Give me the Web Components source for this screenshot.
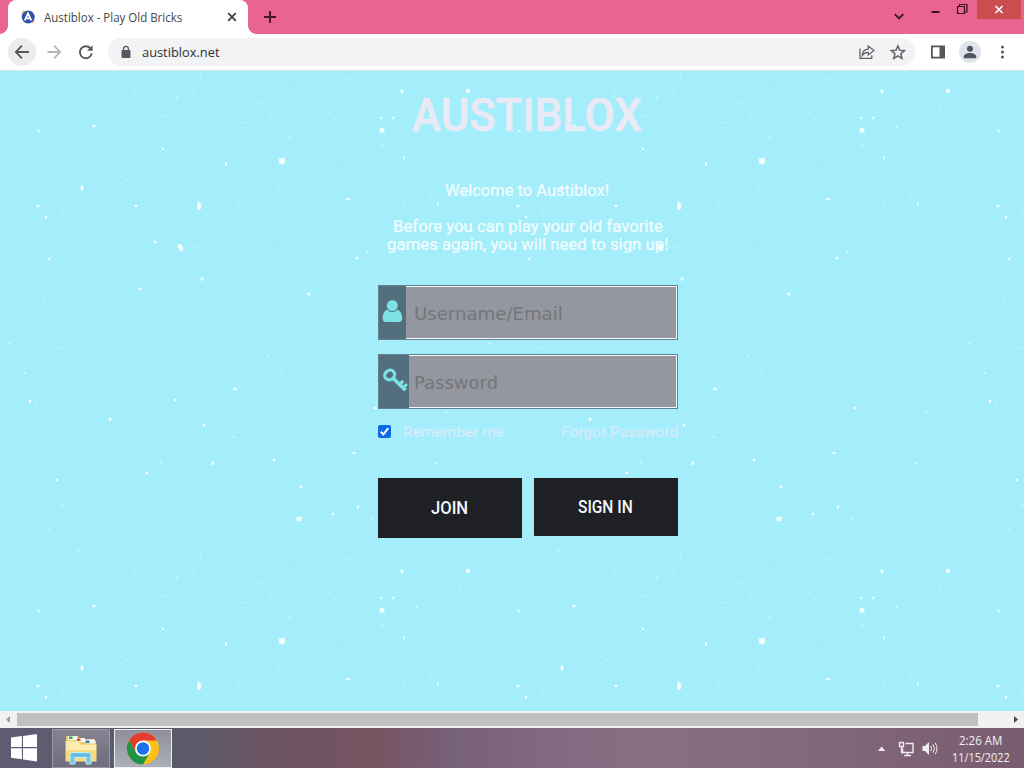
<!DOCTYPE html>
<html lang="en">
<head>
<meta charset="utf-8">
<title>Austiblox - Play Old Bricks</title>
<style>
    html, body{
        margin:0;
        height:100%;
        overflow:hidden;
    }
</style>
</head>
<body>
<desktop-screen></desktop-screen>

<script>
(function () {
    "use strict";

    function define(name, html, setup) {
        var tmpl = document.createElement("template");
        tmpl.innerHTML = html;

        customElements.define(name, class extends HTMLElement {
            constructor() {
                super();
                this.attachShadow({ mode: "open" });
                this.shadowRoot.appendChild(tmpl.content.cloneNode(true));
            }

            connectedCallback() {
                if (setup) {
                    setup(this, this.shadowRoot);
                }
            }
        });
    }

    // text condensed or stretched to the width given in the "width" attribute
    define("fit-text", `
        <style>
            :host{
                display:inline-block;
                white-space:nowrap;
                flex:none;
            }
            span{
                display:inline-block;
                transform-origin:0 50%;
            }
        </style>
        <span><slot></slot></span>
    `, function (host, root) {
        var span = root.querySelector("span");
        var width = Number(host.getAttribute("width"));
        host.style.width = width + "px";
        span.style.transform = "scaleX(" + width / span.offsetWidth + ")";
    });

    define("tab-strip", `
        <style>
            :host{
                display:flex;
                height:34px;
                background:#e96491;
                font:12px "Open Sans", sans-serif;
                color:#45474a;
            }
            .tab{
                position:relative;
                box-sizing:border-box;
                width:240px;
                margin-left:8px;
                padding:0 10px 0 13px;
                display:flex;
                align-items:center;
                background:#fff;
                border-radius:8px 8px 0 0;
            }
            .tab::before, .tab::after{
                content:"";
                position:absolute;
                bottom:0;
                width:8px;
                height:8px;
            }
            .tab::before{
                left:-8px;
                background:radial-gradient(circle at 0 0, transparent 7.5px, #fff 8px);
            }
            .tab::after{
                right:-8px;
                background:radial-gradient(circle at 100% 0, transparent 7.5px, #fff 8px);
            }
            .fav{
                margin-right:9px;
            }
            .x{
                margin-left:auto;
            }
            .plus{
                margin:10px 0 0 15px;
            }
            .down{
                margin:12px 25px 0 auto;
            }
            .win{
                display:flex;
                height:19px;
            }
        </style>
        <div class="tab">
            <svg class="fav" width="14" height="14" viewBox="0 0 14 14">
                <circle cx="7.2" cy="7" r="6.5" fill="#2b55a8"/>
                <path d="M1 3.5 3.5 1" stroke="#e0a04a" stroke-width="1.6"/>
                <path d="M10.5 12.5 13 10.5" stroke="#d05a55" stroke-width="1.6"/>
                <path d="M3.8 10.3 7 3.4l3.2 6.9M5 8.3h4" fill="none" stroke="#fff" stroke-width="1.8"/>
            </svg>
            <fit-text width="138">Austiblox - Play Old Bricks</fit-text>
            <svg class="x" width="12" height="12"><path d="m2.2 2.2 7.6 7.6m0-7.6-7.6 7.6" stroke="#3c4043" stroke-width="1.7"/></svg>
        </div>
        <svg class="plus" width="14" height="14"><path d="M7 1v12M1 7h12" stroke="#431727" stroke-width="1.9"/></svg>
        <svg class="down" width="12" height="9"><path d="m1.7 2.200 4.300 4.300 4.300-4.300" fill="none" stroke="#431727" stroke-width="1.9"/></svg>
        <div class="win">
            <svg width="47" height="19" fill="none" stroke="#35121f">
                <path d="M1.500 12h8" stroke-width="2"/>
                <path d="M27.500 6.500h7v7h-7zM29.500 6V4.500h7.500v7.500h-2" stroke-width="1.200"/>
            </svg>
            <svg width="44" height="19" style="margin-right:3px">
                <path d="M0 0h44v19H0z" fill="#cb4d50"/>
                <path d="m18.5 6 7 7m0-7-7 7" stroke="#fff" stroke-width="1.7"/>
            </svg>
        </div>
    `);

    define("address-bar", `
        <style>
            :host{
                display:flex;
                align-items:center;
                box-sizing:border-box;
                height:37px;
                padding:0 8px;
                background:#fff;
                border-bottom:1px solid #d5e5e7;
                font:13px "Open Sans", sans-serif;
                color:#2e3134;
            }
            svg{
                display:block;
                flex:none;
            }
            .box{
                box-sizing:border-box;
                display:flex;
                align-items:center;
                width:807px;
                height:28px;
                margin:0 15px 0 12px;
                padding:0 7px 0 12px;
                border-radius:14px;
                background:#f1f3f4;
            }
            .box fit-text{
                margin:0 auto 0 10px;
            }
        </style>
        <svg width="88" height="28" fill="none" stroke="#55585c" stroke-width="1.8">
            <circle cx="14" cy="14" r="14" fill="#ececed" stroke="none"/>
            <path d="M21 14H8M14 7.6 7.800 14l6.200 6.400"/>
            <path d="M39.500 14h13M46 7.600l6.200 6.400-6.200 6.400" stroke="#b4b6b8"/>
            <path d="M82.500 10.400a6 6 0 1 0 1.300 4.900"/>
            <path d="M84.600 7.200v5.600H79z" fill="#55585c" stroke="none"/>
        </svg>
        <div class="box">
            <svg width="12" height="14">
                <rect x="1.500" y="5" width="9" height="8" rx="1" fill="#55585c"/>
                <path d="M3.600 6V3.700a2.400 2.400 0 0 1 4.800 0V6" fill="none" stroke="#55585c" stroke-width="1.300"/>
            </svg>
            <fit-text width="78">austiblox.net</fit-text>
            <svg width="50" height="18" fill="none" stroke="#606368" stroke-width="1.300">
                <path d="M2 5.500v9.800h11.800v-3"/>
                <path d="M4.300 12.300c.3-3.900 2.300-5.900 6-6.100V3l5.600 4.500-5.600 4.500V9.300c-2.700 0-4.500.8-6 3z"/>
                <path d="m39.900 2.800 1.900 4.400 4.700.4-3.600 3.100 1.100 4.600-4.100-2.500-4.100 2.500 1.100-4.600-3.600-3.100 4.700-.4z" stroke-width="1.500"/>
            </svg>
        </div>
        <svg width="78" height="24" fill="#55585c">
            <path d="M1 5.500h14v13H1zm1.800 1.800v9.400h6.700V7.300z" fill-rule="evenodd"/>
            <circle cx="40" cy="12" r="11" fill="#dfe4ea"/>
            <circle cx="40" cy="8.700" r="3" fill="#4d5563"/>
            <path d="M33.800 18.200v-1.600c0-2.200 3.400-3.500 6.200-3.500s6.200 1.300 6.200 3.500v1.600z" fill="#4d5563"/>
            <circle cx="72.500" cy="7" r="1.500"/><circle cx="72.500" cy="12" r="1.500"/><circle cx="72.500" cy="17" r="1.500"/>
        </svg>
    `);

    // x, y, rx, ry of each snow fleck on the 480px tile
    var FLECKS = [
        [94,55,2,1.4],[39,60,2,1.2],[177,27,1.3,1.3],[282,90,3.8,3.8],[226,93,1.2,2.6],[163,78,1.3,1.6],
        [82,117,1.9,3.2],[38,135,2,1.4],[136,135,2,1.5],[46,146,1.4,1.4],[199,135,2.4,5],[155,171,2,1.6],
        [202,208,2,2],[140,218,2,1.4],[309,223,2.1,2.1],[49,188,1.4,1.4],[348,128,2.7,1.3],[341,134,1,1],
        [357,187,2.3,1.8],[367,181,1.2,1.2],[235,318,2.4,1.8],[126,83,1,1],[5,83,.9,.9],
        [290,67,1.2,1.2],[271,44,1,1],[258,32,1,1],[30,330,1.6,2],[36,335,1,1],[175,329,1.7,1.7],
        [110,348,2,2],[204,354,1.6,1.4],[207,344,.8,.8],[234,366,1.3,1.3],[218,371,.9,.9],[274,389,1.6,1.6],
        [354,382,2.2,1.6],[161,391,1.1,1.1],[213,392,1.8,2.3],[147,402,1.8,1.4],[57,409,1.5,2],[62,435,1.2,1.2],
        [49,458,1,1],[78,479,1.3,1.1],[262,414,1,1],[301,416,1.5,2],[299,448,3.2,2.9],[333,443,1.6,1.6],
        [333,447,1,.8],[358,436,1.5,2.4],[372,448,1,1],[402,20,1.8,2.3],[468,20,2.6,2.6],[382,59,3,3],
        [381,47,1.5,1.5],[393,47,1.2,1.8],[417,56,1.3,1.3],[382,75,1.2,1.2],[370,83,1,1],[404,87,1.2,1.8],
        [406,81,1,.8],[405,135,1.3,1],[438,133,1.2,1.8],[346,82,1,1],[166,17,.8,.8],[34,13,.8,1],
        [76,193,.9,.9],[85,211,1.2,.9],[115,126,.8,.8],[66,133,1,.7],[210,89,1.2,.8],[127,109,1,.8],
        [206,136,1,.8],[239,135,1,1],[278,135,.9,.9],[298,209,1,1],[311,211,.9,.7],[239,235,1,.9],
        [102,252,1.2,.8],[202,260,1,1],[9,272,1.2,1],[49,278,.9,.9],[61,277,1,1.3],[258,275,1,1],
        [268,285,1.1,1],[25,302,1.2,1.2],[187,292,.7,1.6],[295,292,1,.8],[315,293,1,1],[375,337,2.6,1.4],
        [446,341,1.3,1],[362,220,1,1],[141,237,1,1],[94,305,1.3,1.2],[436,392,2,1],[449,124,.8,.8],
        [429,45,1,.8],[460,36,1,.8],[261,-1,1.6,1],[335,48,1,.8],[313,148,.8,.8],[13,380,1,1],[160,397,.9,.9]
    ];

    define("snow-sky", `
        <style>
            :host{
                position:relative;
                display:block;
                overflow:hidden;
                background:#a3eefa;
            }
            svg{
                position:absolute;
                inset:0;
                width:100%;
                height:100%;
            }
            .over{
                position:relative;
            }
        </style>
        <svg>
            <defs>
                <pattern id="tile" width="480" height="480" patternUnits="userSpaceOnUse">
                    <g id="flecks" fill="#f6ffff"></g>
                    <ellipse cx="180.500" cy="176.500" rx="2.200" ry="4" fill="#f6ffff" transform="rotate(-25 180.500 176.500)"/>
                    <path d="M201 1v8M134 18v9M194 17v9M278 113v9M62 137v9M302 172v7M43 226v8M282 298v8M160 45h8M77 44h6M228 49h8M240 52h8M188 176h16M284 220h11M166 48h6M320 15h6M345 7h8M338 71h7M181 107h5M430 118v12" stroke="#b5f3fc" fill="none"/>
                    <path d="M26 95l3 3M292 12h3M162 31h2M338 91l3 4M275 171h3M234 172v2M238 270v2M318 91l3 1" stroke="#9ae5f2" fill="none"/>
                </pattern>
            </defs>
            <rect width="100%" height="100%" fill="url(#tile)"/>
        </svg>
        <div class="over"><slot></slot></div>
    `, function (host, root) {
        var html = "";
        for (var i = 0; i < FLECKS.length; i++) {
            var f = FLECKS[i];
            var opacity = f[2] * f[3] > 1.7 ? 0.95 : 0.65;
            html += '<ellipse cx="' + f[0] + '" cy="' + f[1] + '" rx="' + f[2] * 0.85 + '" ry="' + f[3] * 0.85 + '" opacity="' + opacity + '"/>';
        }
        root.getElementById("flecks").innerHTML = html;
    });

    define("form-field", `
        <style>
            :host{
                display:flex;
                box-sizing:border-box;
                height:55px;
                border:1px solid #64808c;
                font:18px "DejaVu Sans", sans-serif;
                color:#74767b;
            }
            .icon{
                flex:none;
                background:#536f7d;
            }
            .value{
                flex:1;
                display:flex;
                align-items:center;
                padding-top:2px;
                background:#94979f;
                border:solid #eefcff;
                border-width:1px 1px 1px 0;
            }
            ::slotted(svg){
                display:block;
            }
        </style>
        <div class="icon"><slot name="icon"></slot></div>
        <div class="value"><slot></slot></div>
    `);

    define("action-button", `
        <style>
            :host{
                display:flex;
                align-items:center;
                justify-content:center;
                box-sizing:border-box;
                width:144px;
                padding-right:2px;
                background:#1f2024;
                color:#f3f8fa;
                font:500 17.500px Roboto, sans-serif;
            }
        </style>
        <slot></slot>
    `);

    define("login-form", `
        <style>
            :host{
                display:flex;
                flex-direction:column;
                width:300px;
                margin-left:378px;
                padding-top:21px;
                font:16px/18px Roboto, sans-serif;
                color:#f4fdff;
            }
            h1{
                margin:0 2px 0 0;
                font-size:46px;
                line-height:46px;
                font-weight:500;
                color:#e8eaf6;
                text-align:center;
                height:46px;
                -webkit-text-stroke:.7px;
            }
            .intro{
                display:flex;
                flex-direction:column;
                align-items:center;
                margin:44px -9px 31px -10px;
                -webkit-text-stroke:.2px;
            }
            .intro fit-text:first-child{
                margin:0 2px 18px 0;
            }
            form-field{
                margin-bottom:14px;
            }
            .options{
                display:flex;
                align-items:center;
                height:18px;
                font-size:15.500px;
                color:#d9ebfc;
                -webkit-text-stroke:.2px;
            }
            .options fit-text:last-child{
                margin-left:auto;
            }
            .check{
                margin:0 12px 2px 0;
            }
            .buttons{
                display:flex;
                justify-content:space-between;
                align-items:flex-start;
                margin-top:37px;
            }
        </style>
        <h1><fit-text width="230">AUSTIBLOX</fit-text></h1>
        <div class="intro">
            <fit-text width="164">Welcome to Austiblox!</fit-text>
            <fit-text width="270">Before you can play your old favorite</fit-text>
            <fit-text width="282">games again, you will need to sign up!</fit-text>
        </div>
        <form-field>
            <svg slot="icon" width="27" height="53" fill="#7de2e6">
                <ellipse cx="13.300" cy="19.500" rx="5.400" ry="5.600"/>
                <path d="M8.200 23.600c1.400 1.700 3 2.500 5.100 2.500s3.700-.8 5.100-2.500c3.300 1.500 4.800 4.800 4.800 9 0 2.400-1 3.400-3.100 3.400H6.700c-2.100 0-3-1-3-3.400 0-4.200 1.200-7.500 4.500-9z"/>
            </svg>
            <fit-text width="149" style="margin-left:8px">Username/Email</fit-text>
        </form-field>
        <form-field>
            <svg slot="icon" width="30" height="53" fill="none" stroke="#7de2e6">
                <ellipse cx="10.700" cy="20" rx="5.200" ry="4.600" stroke-width="3.200" transform="rotate(-40 10.700 20)"/>
                <path d="m14 23.200 12.600 12" stroke-width="3.700"/>
                <path d="m21 28.800 3.200-3M24.600 32.300l3.400-3.300" stroke-width="3"/>
            </svg>
            <fit-text width="84" style="margin-left:5px">Password</fit-text>
        </form-field>
        <div class="options">
            <svg class="check" width="13" height="13">
                <rect width="13" height="13" rx="2" fill="#0d69e8"/>
                <path d="m2.800 6.800 2.500 2.600 5-6.200" fill="none" stroke="#fff" stroke-width="2"/>
            </svg>
            <fit-text width="101">Remember me</fit-text>
            <fit-text width="117">Forgot Password</fit-text>
        </div>
        <div class="buttons">
            <action-button style="height:60px"><fit-text width="37">JOIN</fit-text></action-button>
            <action-button style="height:58px"><fit-text width="55">SIGN IN</fit-text></action-button>
        </div>
    `);

    define("scroll-bar", `
        <style>
            :host{
                display:grid;
                grid-template-columns:17px 961px 1fr;
                box-sizing:border-box;
                height:17px;
                padding:2px 0;
                background:#f1f1f1;
            }
            .thumb{
                background:#c0c0c0;
            }
            svg{
                display:block;
            }
            svg:last-child{
                justify-self:end;
            }
        </style>
        <svg width="17" height="13"><path d="M10 3v7L6 6.500z" fill="#9c9c9c"/></svg>
        <div class="thumb"></div>
        <svg width="17" height="13"><path d="M7 3v7l4-3.500z" fill="#454545"/></svg>
    `);

    define("task-bar", `
        <style>
            :host{
                display:flex;
                height:40px;
                background:linear-gradient(90deg, #5e5c73 0, #5c5a69 19%, #6c5361 27%, #775461 37%, #77607a 44%, #826a80 54%, #896f84 63%, #846a7e 76%, #785c70 100%);
                font:12px/17px "Open Sans", sans-serif;
                color:#f4eff3;
            }
            svg{
                display:block;
                flex:none;
            }
            .app{
                box-sizing:border-box;
                width:58px;
                height:39px;
                margin:1px 4px 0 0;
                border:1px solid #9a98a5;
                background:linear-gradient(#85838f, #6f6d7e);
            }
            .app.active{
                border-color:#f0f0f3;
                background:linear-gradient(#8e8f9a, #adb0b8);
            }
            .tray{
                margin-left:auto;
            }
            .clock{
                display:flex;
                flex-direction:column;
                align-items:center;
                margin:4px 14px 0 12px;
            }
            .clock fit-text:first-child{
                margin-right:2px;
            }
        </style>
        <svg width="52" height="40">
            <path d="m11 9.600 10.900-1.500v11H11zM23 7.900 37 6v13.100H23zM11 20.200h10.900v11L11 29.700zM23 20.200h14v13.300l-14-2z" fill="#fff"/>
        </svg>
        <div class="app">
            <svg width="56" height="37">
                <path d="M13 6h12l2 3h13l3 2v20H13z" fill="#e8c765"/>
                <path d="M15 6h9v4h-9zM24 8h8v4h-8zM33 9.500h9v4h-9z" fill="#fafaf0"/>
                <path d="M16 6.500h3.500v2.500H16z" fill="#32a548"/>
                <path d="M24 8.500h3.500V11H24z" fill="#d94b35"/>
                <path d="M33 10.500h3.500V13H33z" fill="#397ebc"/>
                <path d="M12.500 10.500h12l4 3.500h15v17.500h-31z" fill="#f4dc82"/>
                <path d="M13 11.500h11l4 3.500h15v5H13z" fill="#fcedae"/>
                <path d="M17 34v-8.500q0-3 2.500-3h16q2.500 0 2.500 3V34h-5v-6.500H22V34z" fill="#77c4e4" stroke="#c5eaf6"/>
                <path d="M18 25h19" stroke="#4bacd6"/>
            </svg>
        </div>
        <div class="app active">
            <svg width="56" height="37" viewBox="0 0 56 37">
                <g transform="translate(28 18.500)">
                    <circle r="16" fill="#fbc116"/>
                    <path d="M0-8H13.860A16 16 0 0 0-13.860-8L-6.930 4 0 0z" fill="#e33b2e"/>
                    <path d="M-13.860-8A16 16 0 0 0 0 16L6.930 4-6.930 4z" fill="#229342"/>
                    <circle r="8" fill="#fff"/>
                    <circle r="6.300" fill="#1a73e8"/>
                </g>
            </svg>
        </div>
        <svg class="tray" width="63" height="40" fill="none" stroke="#f2ebf0">
            <path d="m1 23 3.700-4.500L8.400 23z" fill="#f2ebf0" stroke="none"/>
            <path d="M28.500 15.500h7.500v9H25.500v-4.500M30.500 25v2M27 27.500h7" stroke-width="1.400"/>
            <path d="M22.500 14.500h4v4h-4zM24.500 18.500v6h2" stroke-width="1.400"/>
            <path d="M45.500 18h2.500l4-4v13l-4-4h-2.500z" fill="#f2ebf0" stroke="none"/>
            <path d="M53.800 18q1.600 2.500 0 5M56 16.300q3 4.200 0 8.400M58.200 14.800q3.500 5.700 0 11.400"/>
        </svg>
        <div class="clock">
            <fit-text width="43">2:26 AM</fit-text>
            <fit-text width="58">11/15/2022</fit-text>
        </div>
    `);

    define("desktop-screen", `
        <style>
            :host{
                display:flex;
                flex-direction:column;
                width:1024px;
                height:768px;
                overflow:hidden;
            }
            snow-sky{
                flex:1;
            }
        </style>
        <tab-strip></tab-strip>
        <address-bar></address-bar>
        <snow-sky><login-form></login-form></snow-sky>
        <scroll-bar></scroll-bar>
        <task-bar></task-bar>
    `);
})();
</script>
</body>
</html>
